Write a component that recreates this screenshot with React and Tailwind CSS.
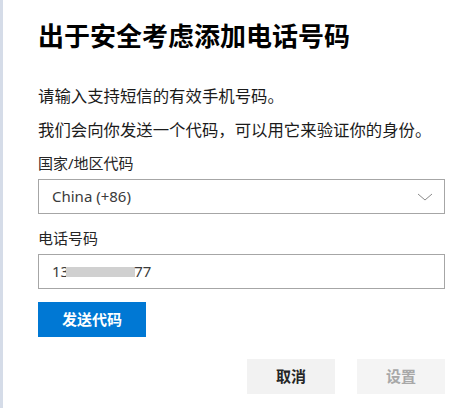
const font = 'font-["Noto_Sans","Noto_Sans_CJK_SC",sans-serif]';

function Field({ label, children, className = '' }) {
  return (
    <div className={className}>
      <div className="text-[15px] leading-[22px] text-[#262626]">{label}</div>
      <div className="mt-[5px] flex h-[35px] items-center border border-[#a6a6a6] bg-white pl-[13px] pr-[11px] text-[15px] text-[#3b3b3b]">
        {children}
      </div>
    </div>
  );
}

export default function App() {
  return (
    <div className={`flex h-[408px] w-[461px] bg-white ${font}`}>
      <div className="w-[3px] shrink-0 bg-[#d5dce8]" />
      <div className="flex-1 pl-[35px] pr-[16px]">
        <h1 className="mt-[19px] text-[26px] font-bold leading-[34px] text-black">
          出于安全考虑添加电话号码
        </h1>
        <p className="mt-[31px] text-[16.4px] leading-[24px] text-[#1b1b1b]">
          请输入支持短信的有效手机号码。
        </p>
        <p className="mt-[10px] whitespace-nowrap text-[16.4px] leading-[24px] text-[#1b1b1b]">
          我们会向你发送一个代码，可以用它来验证你的身份。
        </p>

        <Field label="国家/地区代码" className="mt-[10px]">
          <span className="flex-1">China (+86)</span>
          <svg width="16" height="8" viewBox="0 0 16 8" fill="none">
            <path d="M1 1l7 6 7-6" stroke="#8a8a8a" strokeWidth="1" />
          </svg>
        </Field>

        <Field label="电话号码" className="mt-[13px]">
          <span>13</span>
          <span className="-ml-[3px] inline-block h-[10px] w-[69px] bg-[#d0d0d0]" />
          <span className="-ml-[1px]">77</span>
        </Field>

        <button className="mt-[13px] h-[35px] w-[108px] bg-[#0078d4] text-[15px] font-bold text-white">
          发送代码
        </button>

        <div className="mt-[22px] flex justify-end gap-[22px]">
          <button className="h-[35px] w-[88px] bg-[#f2f2f2] text-[15px] font-bold text-[#262626]">
            取消
          </button>
          <button className="h-[35px] w-[88px] bg-[#f4f4f4] text-[15px] font-bold text-[#a8a8a8]">
            设置
          </button>
        </div>
      </div>
    </div>
  );
}
